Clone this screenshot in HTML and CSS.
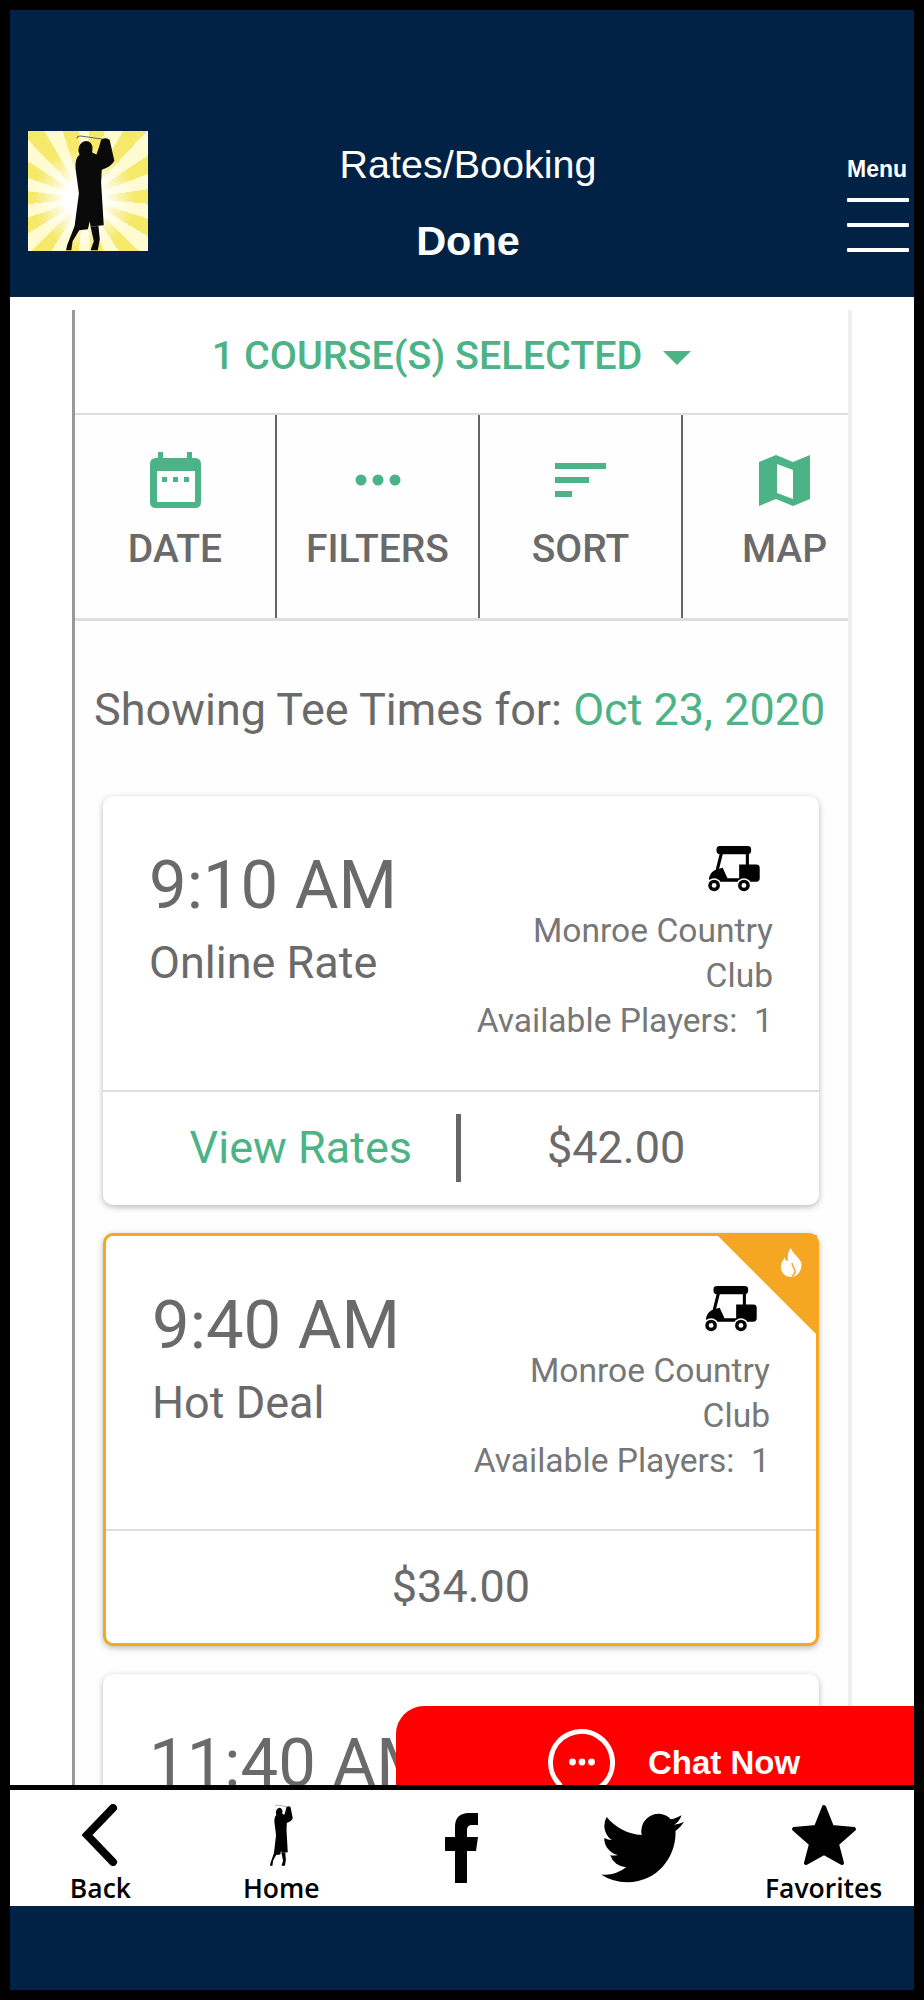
FILE: index.html
```html
<!DOCTYPE html>
<html lang="en">
<head>
  <meta charset="UTF-8">
  <meta name="viewport" content="width=device-width, initial-scale=1.0">
  <title>Rates/Booking</title>
  <link rel="stylesheet" href="styles.css">
</head>
<body>
  <svg class="defs" width="0" height="0">
    <symbol id="golfer" viewBox="160 45 160 350" preserveAspectRatio="none">
      <path d="M199 58 Q201 50 210 51 L274 60" fill="none" stroke="#666" stroke-width="3"/>
      <path d="M207 107 Q201 96 205 84 Q211 67 227 66 Q243 67 246 84 L245 100 L258 106 L267 80 L272 62 Q288 53 298 63 L304 90 L312 125 Q304 142 274 152 L272 190 L280 318 L240 322 L238 306 L232 330 L206 333 L186 366 L182 393 L166 393 L170 376 L192 320 L205 222 L195 150 Q192 118 207 107Z"/>
      <path d="M240 322 L264 320 L268 360 L262 393 L240 393 L250 366Z"/>
    </symbol>
    <symbol id="cart" viewBox="55 45 156 140">
      <rect x="82" y="48" width="101" height="24" rx="10"/>
      <path d="M96 70 L84 118" stroke="#000" stroke-width="9"/>
      <path d="M172 70 V106" stroke="#000" stroke-width="9"/>
      <path d="M60 142 Q64 122 84 116 L100 111 L114 142 H148 V102 H198 Q208 102 208 112 V142 Q208 152 198 152 H62Z"/>
      <circle cx="75" cy="163" r="21" fill="#fff"/>
      <circle cx="75" cy="163" r="17"/>
      <circle cx="75" cy="163" r="7" fill="#fff"/>
      <circle cx="162" cy="163" r="21" fill="#fff"/>
      <circle cx="162" cy="163" r="17"/>
      <circle cx="162" cy="163" r="7" fill="#fff"/>
    </symbol>
  </svg>

  <div class="screen">
    <header class="topbar">
      <div class="logo">
        <svg class="logo-golfer"><use href="#golfer"/></svg>
      </div>
      <div class="title">
        <div class="title-main">Rates/Booking</div>
        <div class="title-done">Done</div>
      </div>
      <div class="menu">
        <div class="menu-label">Menu</div>
        <div class="menu-bar"></div>
        <div class="menu-bar"></div>
        <div class="menu-bar"></div>
      </div>
    </header>

    <main class="content">
      <div class="panel">
        <div class="course-select">
          <span>1 COURSE(S) SELECTED</span>
          <span class="caret"></span>
        </div>

        <div class="tabs">
          <div class="tab">
            <div class="tab-icon">
              <svg width="51" height="56" viewBox="0 0 51 56">
                <path fill-rule="evenodd" d="M8 0H13V6H37V0H42V6H45Q51 6 51 12V50Q51 56 45 56H6Q0 56 0 50V12Q0 6 6 6H8ZM7 19V50H45V19Z"/>
                <rect x="12" y="25" width="5" height="5"/>
                <rect x="23" y="25" width="5" height="5"/>
                <rect x="34" y="25" width="5" height="5"/>
              </svg>
            </div>
            <div class="tab-label">DATE</div>
          </div>
          <div class="tab">
            <div class="tab-icon">
              <svg width="46" height="12" viewBox="0 0 46 12">
                <circle cx="6" cy="6" r="5.5"/>
                <circle cx="23" cy="6" r="5.5"/>
                <circle cx="40" cy="6" r="5.5"/>
              </svg>
            </div>
            <div class="tab-label">FILTERS</div>
          </div>
          <div class="tab">
            <div class="tab-icon">
              <svg width="51" height="34" viewBox="0 0 51 34">
                <rect width="51" height="6"/>
                <rect y="14" width="34" height="6"/>
                <rect y="28" width="17" height="6"/>
              </svg>
            </div>
            <div class="tab-label">SORT</div>
          </div>
          <div class="tab">
            <div class="tab-icon">
              <svg width="51" height="51" viewBox="0 0 51 51">
                <path fill-rule="evenodd" d="M0 7L17 0L34 7L51 0V44L34 51L17 44L0 51ZM18 9V38L34 44V15Z"/>
              </svg>
            </div>
            <div class="tab-label">MAP</div>
          </div>
        </div>

        <div class="showing">Showing Tee Times for: <span class="green">Oct 23, 2020</span></div>

        <div class="card">
          <div class="card-body">
            <div class="slot">
              <div class="slot-time">9:10 AM</div>
              <div class="slot-rate">Online Rate</div>
            </div>
            <div class="course">
              <svg class="cart"><use href="#cart"/></svg>
              <div class="course-name">Monroe Country Club</div>
              <div>Available Players:&nbsp; 1</div>
            </div>
          </div>
          <div class="card-foot">
            <a class="view-rates">View Rates</a>
            <div class="foot-sep"></div>
            <div class="price price-split">$42.00</div>
          </div>
        </div>

        <div class="card card-hot">
          <div class="hot-corner">
            <svg class="flame" viewBox="0 0 22 29">
              <path d="M11 0C12 5 18 8 21 14C23 21 18 29 11 29C4 29 0 23 1 17C2 13 4 11 5 9C5 12 6 13 8 13C7 8 8 3 11 0Z"/>
              <path class="flame-inner" d="M12 15C12 19 15 20 15 23C15 25 14 27 12 28"/>
            </svg>
          </div>
          <div class="card-body">
            <div class="slot">
              <div class="slot-time">9:40 AM</div>
              <div class="slot-rate">Hot Deal</div>
            </div>
            <div class="course">
              <svg class="cart"><use href="#cart"/></svg>
              <div class="course-name">Monroe Country Club</div>
              <div>Available Players:&nbsp; 1</div>
            </div>
          </div>
          <div class="card-foot card-foot-center">
            <div class="price">$34.00</div>
          </div>
        </div>

        <div class="card">
          <div class="card-body">
            <div class="slot">
              <div class="slot-time">11:40 AM</div>
            </div>
          </div>
        </div>
      </div>

      <div class="chat">
        <svg class="chat-icon" width="67" height="80" viewBox="0 0 67 80">
          <path d="M11.6 55.4A31 31 0 1 1 25 63.3Q15 66 9 72Q15 63 11.6 55.4Z" fill="none" stroke="#fff" stroke-width="5"/>
          <circle cx="24.5" cy="33" r="3.4" fill="#fff"/>
          <circle cx="34" cy="33" r="3.4" fill="#fff"/>
          <circle cx="43.5" cy="33" r="3.4" fill="#fff"/>
        </svg>
        <span class="chat-text">Chat Now</span>
      </div>
    </main>

    <nav class="bottom-nav">
      <div class="nav-item">
        <svg width="36" height="62" viewBox="0 0 36 62">
          <path d="M31 4L5 31L31 58" fill="none" stroke="#000" stroke-width="8" stroke-linecap="round"/>
        </svg>
        <div class="nav-label">Back</div>
      </div>
      <div class="nav-item">
        <svg width="25" height="62"><use href="#golfer"/></svg>
        <div class="nav-label">Home</div>
      </div>
      <div class="nav-item nav-social">
        <svg width="33" height="70" viewBox="0 0 33 70">
          <path d="M10 70V38H0V24H10V14Q10 0 24 0H33V12H27Q22 12 22 17V24H33L31 38H22V70Z"/>
        </svg>
      </div>
      <div class="nav-item nav-social">
        <svg width="83" height="70" viewBox="0 0 24 20" preserveAspectRatio="none">
          <path d="M23.953 2.57a10 10 0 01-2.825.775 4.958 4.958 0 002.163-2.723c-.951.555-2.005.959-3.127 1.184a4.92 4.92 0 00-8.384 4.482C7.69 6.095 4.067 4.13 1.64 1.162a4.822 4.822 0 00-.666 2.475c0 1.71.87 3.213 2.188 4.096a4.904 4.904 0 01-2.228-.616v.06a4.923 4.923 0 003.946 4.827 4.996 4.996 0 01-2.212.085 4.936 4.936 0 004.604 3.417 9.867 9.867 0 01-6.102 2.105c-.39 0-.779-.023-1.17-.067a13.995 13.995 0 007.557 2.209c9.053 0 13.998-7.496 13.998-13.985 0-.21 0-.42-.015-.63A9.935 9.935 0 0024 2.59z"/>
        </svg>
      </div>
      <div class="nav-item">
        <svg width="66" height="62" viewBox="0 0 66 62">
          <path d="M33 3L41 23L63 25L46 40L51 59L33 49L15 59L20 40L3 25L25 23Z" stroke="#000" stroke-width="4" stroke-linejoin="round"/>
        </svg>
        <div class="nav-label">Favorites</div>
      </div>
    </nav>

    <div class="bottom-bar"></div>
  </div>
</body>
</html>
```

FILE: styles.css
```css
* {
  box-sizing: border-box;
}

html, body {
  margin: 0;
  padding: 0;
}

body {
  background: #000;
  height: 2000px;
  padding: 10px;
  overflow: hidden;
  font-family: 'Roboto', sans-serif;
  color: #6a6a6a;
}

.defs {
  position: absolute;
}

.screen {
  display: flex;
  flex-direction: column;
  height: 1980px;
}

/* top bar */
.topbar {
  display: flex;
  height: 287px;
  flex-shrink: 0;
  padding: 121px 5px 0 18px;
  background: #012245;
  color: #fff;
  font-family: 'Liberation Sans', Arial, sans-serif;
}

.logo {
  width: 120px;
  height: 120px;
  flex-shrink: 0;
  padding: 3px 0 0 36px;
  background:
    radial-gradient(circle at 47% 56%, #fff 0, #fff 20%, rgba(255, 255, 255, 0) 55%),
    repeating-conic-gradient(from 4deg at 47% 56%, #f6e96a 0deg 13deg, #fffbd0 13deg 26deg);
}

.logo-golfer {
  display: block;
  width: 53px;
  height: 117px;
  fill: #0a0a0a;
}

.title {
  flex: 1;
  margin-right: 59px;
  padding-top: 10px;
  text-align: center;
}

.title-main {
  font-size: 39.5px;
  line-height: 46px;
}

.title-done {
  margin-top: 31px;
  font-size: 41.5px;
  font-weight: 700;
  line-height: 46px;
}

.menu {
  width: 62px;
  flex-shrink: 0;
  padding-top: 24px;
}

.menu-label {
  margin-bottom: 15px;
  font-size: 23px;
  font-weight: 700;
  line-height: 28px;
}

.menu-bar {
  height: 4px;
  margin-bottom: 21px;
  background: #fff;
  border-radius: 1px;
}

/* scrolling area */
.content {
  position: relative;
  flex: 1;
  overflow: hidden;
  padding: 13px 0 0 62px;
  background: #fff;
}

.panel {
  width: 780px;
  border-left: 3px solid #999;
  border-right: 4px solid #eee;
  background: #fefefe;
}

.course-select {
  display: flex;
  justify-content: center;
  align-items: center;
  gap: 21px;
  height: 103px;
  padding: 0 20px 13px 0;
  background: #fff;
  color: #4cb386;
  font-size: 39.5px;
  font-weight: 500;
}

.caret {
  width: 0;
  height: 0;
  margin-top: 6px;
  border-left: 14px solid transparent;
  border-right: 14px solid transparent;
  border-top: 14px solid #4cb386;
}

.tabs {
  display: grid;
  grid-template-columns: 202px 203px 203px 203px;
  height: 208px;
  overflow: hidden;
  border-top: 2px solid #ddd;
  border-bottom: 3px solid #ddd;
}

.tab {
  padding-top: 35px;
  border-right: 2px solid #666;
  text-align: center;
}

.tab:last-child {
  border-right: none;
}

.tab-icon {
  display: flex;
  justify-content: center;
  align-items: center;
  height: 60px;
  fill: #4cb386;
}

.tab-label {
  margin-top: 17px;
  font-size: 39px;
  font-weight: 500;
  line-height: 44px;
}

.showing {
  padding: 65px 0 62px 19px;
  font-size: 45px;
  line-height: 48px;
  white-space: nowrap;
}

.green {
  color: #4cb386;
}

/* tee time cards */
.card {
  position: relative;
  width: 716px;
  margin: 0 0 28px 28px;
  background: #fff;
  border-radius: 10px;
  box-shadow: 0 2px 6px rgba(0, 0, 0, 0.28);
}

.card-hot {
  border: 3px solid #f5a623;
}

.hot-corner {
  position: absolute;
  top: -1px;
  right: -1px;
  width: 100px;
  height: 100px;
  clip-path: polygon(0 0, 100% 0, 100% 100%);
  background: #f5a623;
}

.flame {
  position: absolute;
  top: 13px;
  right: 15px;
  width: 22px;
  height: 29px;
  fill: #fff;
}

.flame-inner {
  fill: none;
  stroke: #f5a623;
  stroke-width: 1.5;
}

.card-body {
  display: flex;
  justify-content: space-between;
  height: 294px;
  padding: 49px 46px 0 46px;
}

.card-hot .card-body {
  height: 293px;
}

.slot-time {
  font-size: 67px;
  line-height: 80px;
  white-space: nowrap;
}

.slot-rate {
  margin-top: 14px;
  font-size: 45px;
  line-height: 48px;
}

.course {
  width: 300px;
  text-align: right;
  font-size: 33.6px;
  line-height: 45px;
  color: #777;
  white-space: nowrap;
}

.course-name {
  white-space: normal;
}

.cart {
  display: block;
  width: 54px;
  height: 48px;
  margin: 0 12px 15px auto;
}

.card-foot {
  display: flex;
  align-items: center;
  height: 115px;
  padding-bottom: 2px;
  border-top: 2px solid #ddd;
  font-size: 45px;
}

.card-hot .card-foot {
  height: 114px;
}

.card-foot-center {
  justify-content: center;
}

.view-rates {
  flex: 0 0 353px;
  padding-right: 44px;
  color: #4cb386;
  text-align: right;
  white-space: nowrap;
}

.foot-sep {
  width: 5px;
  height: 68px;
  background: #666;
}

.price-split {
  padding-left: 86px;
}

/* floating chat button */
.chat {
  position: absolute;
  top: 1409px;
  left: 386px;
  right: 0;
  height: 100px;
  display: flex;
  align-items: flex-start;
  padding: 23px 0 0 152px;
  background: #f00;
  border-top-left-radius: 28px;
  color: #fff;
  font-family: 'Liberation Sans', Arial, sans-serif;
}

.chat-text {
  margin: 14px 0 0 33px;
  font-size: 33px;
  font-weight: 700;
  line-height: 40px;
}

/* bottom nav */
.bottom-nav {
  display: grid;
  grid-template-columns: repeat(5, 1fr);
  height: 121px;
  flex-shrink: 0;
  border-top: 5px solid #000;
  background: #fff;
  color: #000;
}

.nav-item {
  display: flex;
  flex-direction: column;
  align-items: center;
  padding-top: 14px;
}

.nav-social {
  padding-top: 23px;
}

.nav-label {
  margin-top: 7px;
  font-family: 'Open Sans', sans-serif;
  font-size: 26.5px;
  font-weight: 600;
  line-height: 30px;
}

.bottom-bar {
  flex: 0 0 84px;
  background: #012245;
}
```
